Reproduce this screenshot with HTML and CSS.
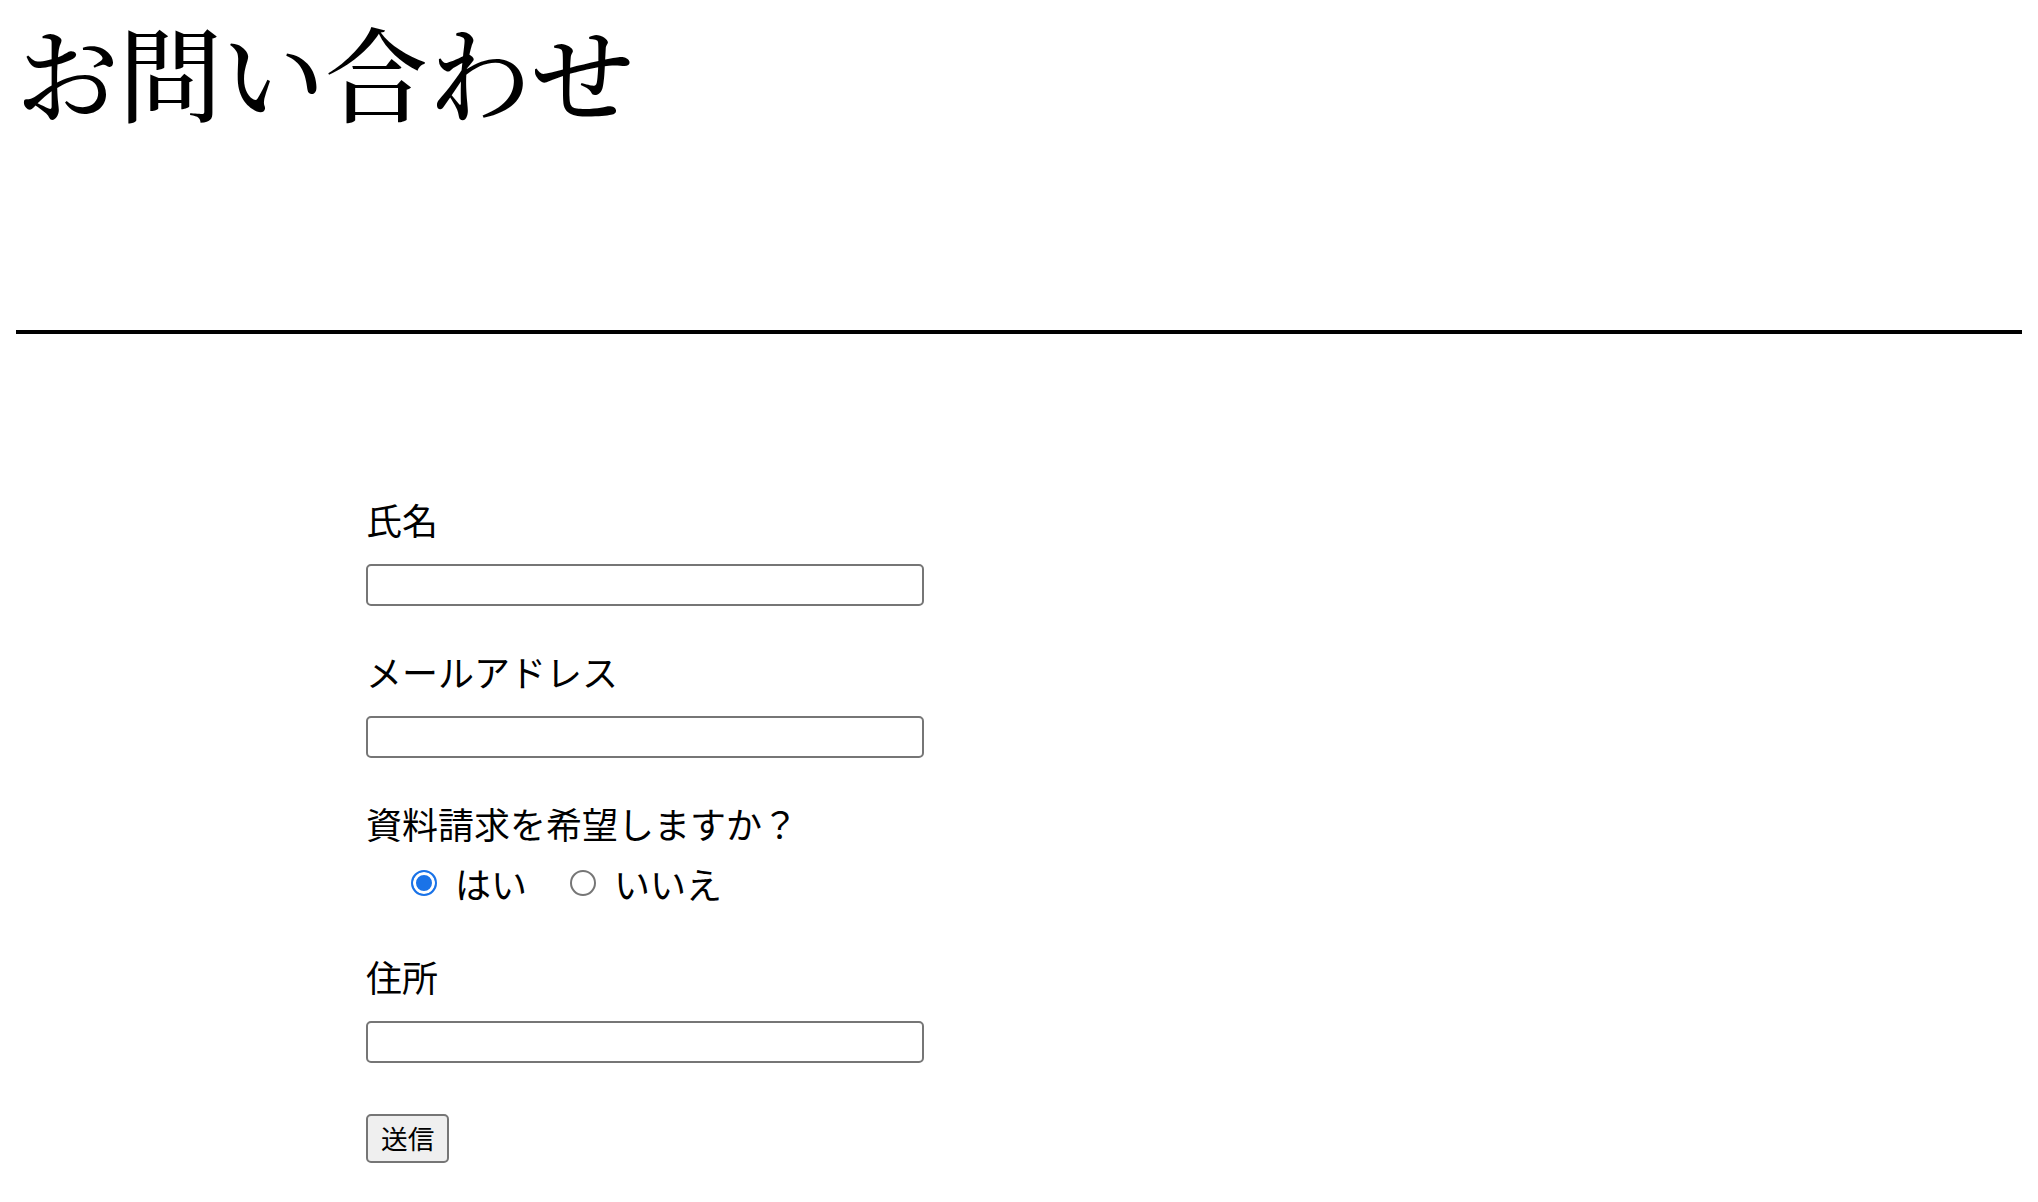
FILE: index.html
```html
<!DOCTYPE html>
<html lang="ja">
<head>
<meta charset="utf-8">
<title>お問い合わせ</title>
<link rel="stylesheet" href="styles.css">
</head>
<body>
<header class="site-header">
  <h1 class="title">お問い合わせ</h1>
</header>
<hr class="divider">
<form class="contact-form">
  <div class="field">
    <label class="field-label" for="name">氏名</label>
    <input class="text-input" id="name" type="text">
  </div>
  <div class="field">
    <label class="field-label" for="email">メールアドレス</label>
    <input class="text-input" id="email" type="email">
  </div>
  <div class="field">
    <p class="field-label">資料請求を希望しますか？</p>
    <div class="radio-row">
      <label class="radio-option"><input class="radio" type="radio" name="request" checked><span>はい</span></label>
      <label class="radio-option"><input class="radio" type="radio" name="request"><span>いいえ</span></label>
    </div>
  </div>
  <div class="field">
    <label class="field-label" for="address">住所</label>
    <input class="text-input" id="address" type="text">
  </div>
  <button class="submit" type="button">送信</button>
</form>
</body>
</html>
```

FILE: styles.css
```css
html, body {
  background: #fff;
}

body {
  margin: 0;
  padding: 16px;
  color: #000;
  font-family: "Noto Sans CJK JP", sans-serif;
}

.site-header {
  display: block;
}

.title {
  margin: 0;
  font-family: "Noto Serif CJK JP", "Noto Sans CJK JP", serif;
  font-size: 103px;
  font-weight: 500;
  line-height: 108px;
  letter-spacing: 0;
}

.divider {
  margin: 206px 0 0;
  border: 0;
  height: 4px;
  background: #000;
}

.contact-form {
  margin-left: 350px;
  padding-top: 159px;
  display: flex;
  flex-direction: column;
  align-items: flex-start;
  gap: 39px;
}

.field {
  display: flex;
  flex-direction: column;
  align-items: flex-start;
}

.field-label {
  margin: 0;
  font-size: 36px;
  line-height: 52px;
}

.text-input {
  margin: 19px 0 0;
  width: 558px;
  height: 42px;
  box-sizing: border-box;
  border: 2px solid #767676;
  border-radius: 5px;
  padding: 0 4px;
  font-size: 26px;
  background: #fff;
}

.radio-row {
  margin: 8px 0 2px;
  padding-left: 45px;
  display: flex;
  gap: 43px;
  font-size: 36px;
  line-height: 52px;
}

.radio-option {
  display: flex;
  align-items: center;
  gap: 18px;
}

.radio {
  appearance: none;
  -webkit-appearance: none;
  margin: 0;
  width: 26px;
  height: 26px;
  box-sizing: border-box;
  border: 2px solid #767676;
  border-radius: 50%;
  background: #fff;
}

.radio:checked {
  border-color: #1a73e8;
  background: #1a73e8;
  box-shadow: inset 0 0 0 3px #fff;
}

.submit {
  margin-top: 12px;
  height: 49px;
  box-sizing: border-box;
  padding: 0 13px;
  font-family: "Noto Sans CJK JP", sans-serif;
  font-size: 26.67px;
  line-height: 1;
  color: #000;
  background: #efefef;
  border: 2px solid #767676;
  border-radius: 5px;
}
```
